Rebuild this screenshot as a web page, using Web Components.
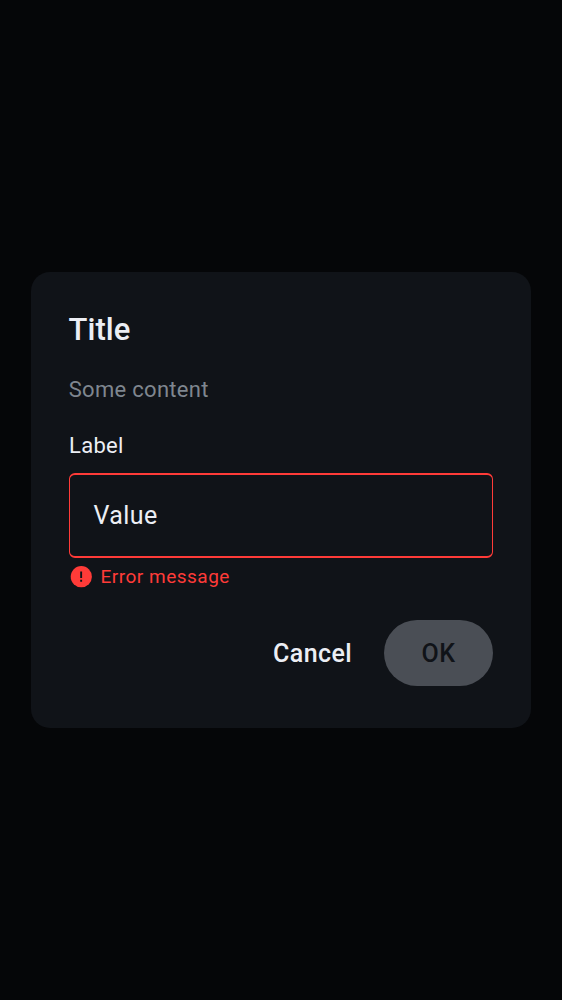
<!DOCTYPE html>
<html lang="en"><head><meta charset="utf-8"><title>Dialog</title>
<style>
html,body{margin:0;height:100%;background:#050608}
body{font-family:Roboto,sans-serif}
</style></head><body>
<dialog-scrim>
  <alert-dialog>
    <span slot="title">Title</span>
    <span slot="content">Some content</span>
    <text-field label="Label" value="Value" error="Error message"></text-field>
    <dialog-button slot="actions">Cancel</dialog-button>
    <dialog-button slot="actions" filled>OK</dialog-button>
  </alert-dialog>
</dialog-scrim>
<script>
const define=(name,html,setup)=>customElements.define(name,class extends HTMLElement{
  constructor(){super();this.attachShadow({mode:'open'}).innerHTML=html}
  connectedCallback(){if(setup)setup(this)}
});
define('dialog-scrim',`<style>:host{display:flex;align-items:center;justify-content:center;height:100vh;background:#050608}</style><slot></slot>`);
define('alert-dialog',`<style>
:host{display:block;box-sizing:border-box;width:500px;height:456px;padding:38px 38px 0;border-radius:19px;background:#101318;color:#eceef4}
h1{margin:0 0 0 -.4px;font-size:31px;line-height:40px;font-weight:500}
p{margin:22px 0 0 -.3px;font-size:22px;line-height:36px;letter-spacing:.3px;color:#7f868f}
.actions{display:flex;justify-content:flex-end;align-items:center;margin-top:28px}
</style><h1><slot name="title"></slot></h1><p><slot name="content"></slot></p><slot></slot><div class="actions"><slot name="actions"></slot></div>`);
define('text-field',`<style>
:host{display:block;margin-top:20px}
.label{font-size:22px;line-height:36px;letter-spacing:.3px}
.box{box-sizing:border-box;height:85px;margin-top:9px;padding:0 23.6px;border:solid #ff3b38;border-width:2px 1px;border-radius:6px;display:flex;align-items:center;font-size:25px;letter-spacing:.4px}
.error{display:flex;align-items:center;gap:7.5px;height:31px;margin-top:3px;color:#ff3b38;font-size:19px;letter-spacing:.5px}
svg{width:24px;height:24px}
</style><div class="label"></div><div class="box"></div><div class="error"><svg viewBox="0 0 24 24"><circle cx="12.3" cy="11.7" r="10.6" fill="#ff3b38"/><path d="M11.2 6.5h1.9v6.4h-1.9zm0 8.3h1.9v2h-1.9z" fill="#101318"/></svg><span></span></div>`,e=>{
 const r=e.shadowRoot;r.querySelector('.label').textContent=e.getAttribute('label');r.querySelector('.box').textContent=e.getAttribute('value');r.querySelector('.error span').textContent=e.getAttribute('error')});
define('dialog-button',`<style>
:host{display:flex;align-items:center;justify-content:center;height:66px;padding:0 32px;border-radius:33px;font-size:25px;font-weight:500;letter-spacing:.4px}
:host([filled]){box-sizing:border-box;width:109px;padding:0;background:#4a4e55;color:#101318}
</style><slot></slot>`);
</script></body></html>
